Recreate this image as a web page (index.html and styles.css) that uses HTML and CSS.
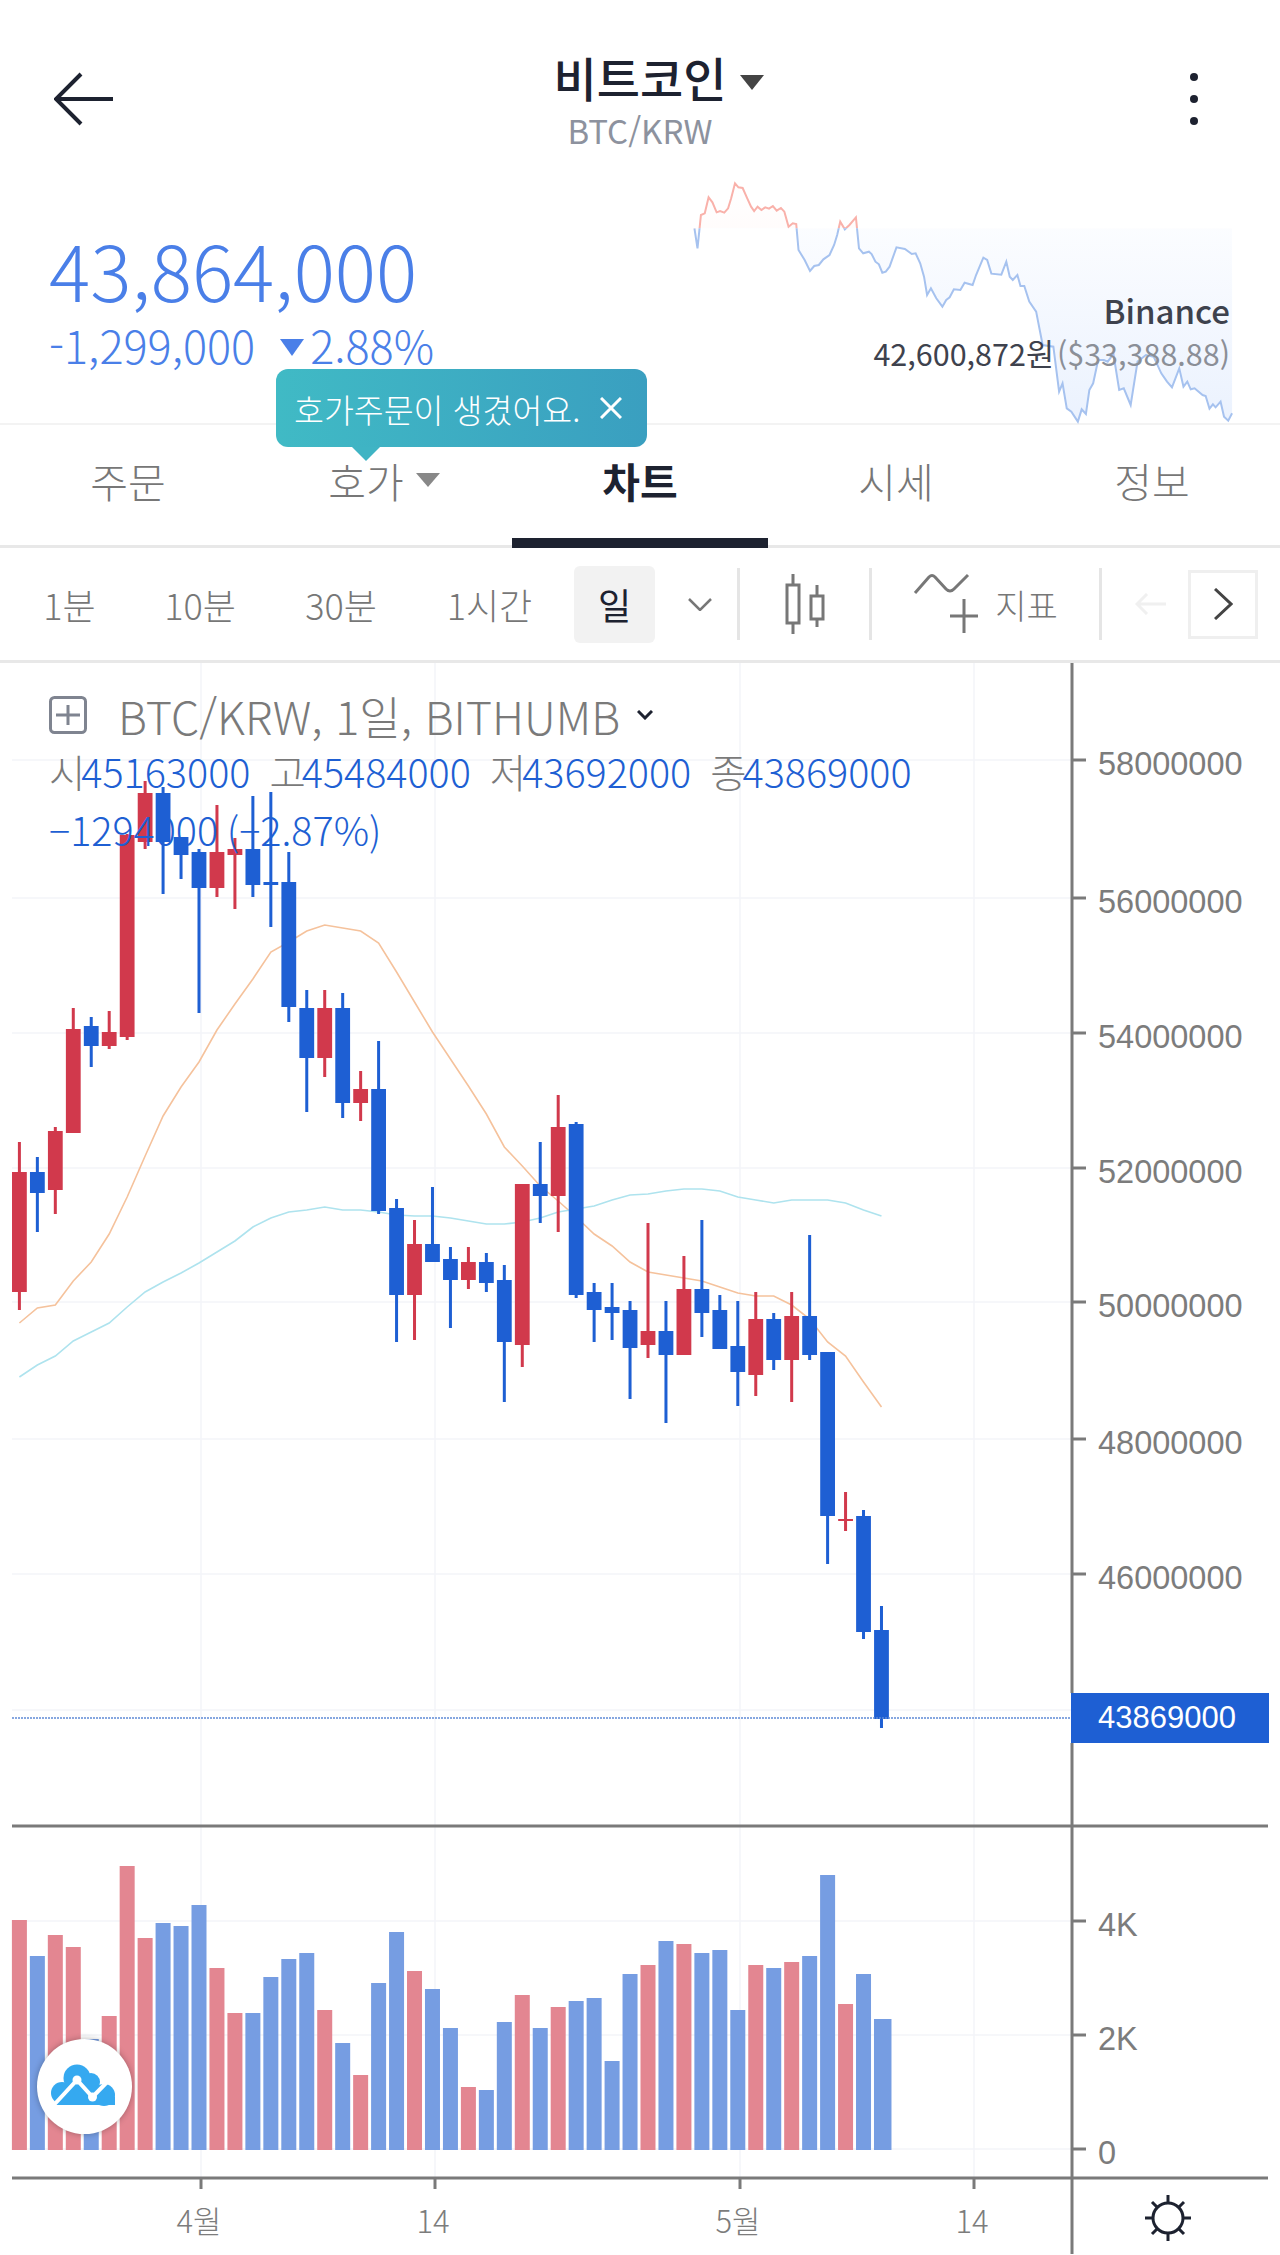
FILE: index.html
```html
<!DOCTYPE html>
<html lang="ko">
<head>
    <meta charset="UTF-8">
    <meta name="viewport" content="width=device-width, initial-scale=1.0">
    <title>비트코인 BTC/KRW</title>
    <link rel="stylesheet" href="styles.css">
</head>
<body>
    <header class="topbar">
        <svg class="icon-back" viewBox="0 0 60 54">
            <path d="M27 2 L2 27 L27 52 M2 27 H59"/>
        </svg>
        <div class="coin">
            <h1 class="coin-name">비트코인<span class="caret caret-title"></span></h1>
            <div class="coin-pair">BTC/KRW</div>
        </div>
        <div class="more"><i></i><i></i><i></i></div>
    </header>

    <section class="summary">
        <svg id="spark" class="spark" viewBox="0 0 1568 810" preserveAspectRatio="none"></svg>
        <div class="price">43,864,000</div>
        <div class="change">
            <span>-1,299,000</span>
            <span class="caret caret-down"></span>
            <span>2.88%</span>
        </div>
        <div class="exchange">
            <div class="exchange-name">Binance</div>
            <div class="exchange-price">42,600,872원<span class="exchange-usd">($33,388.88)</span></div>
        </div>
    </section>

    <div class="tip">
        <span>호가주문이 생겼어요.</span>
        <svg class="tip-close" viewBox="0 0 22 22"><path d="M1 1 L21 21 M21 1 L1 21"/></svg>
    </div>

    <nav class="tabs">
        <a class="tab">주문</a>
        <a class="tab">호가<span class="caret caret-tab"></span></a>
        <a class="tab active">차트</a>
        <a class="tab">시세</a>
        <a class="tab">정보</a>
    </nav>

    <div class="toolbar">
        <a class="tf tf-1">1분</a>
        <a class="tf tf-2">10분</a>
        <a class="tf tf-3">30분</a>
        <a class="tf tf-4">1시간</a>
        <a class="tf tf-day">일</a>
        <a class="tool tool-more">
            <svg class="icon-chev" viewBox="0 0 24 13"><path d="M1 1 L12 12 L23 1"/></svg>
        </a>
        <a class="tool tool-candle">
            <svg class="icon-line" width="40" height="60" viewBox="0 0 40 60">
                <rect x="2" y="11" width="12" height="38"/>
                <path d="M8 0 V11 M8 49 V60"/>
                <rect x="26" y="22" width="12" height="23"/>
                <path d="M32 11 V22 M32 45 V53"/>
            </svg>
        </a>
        <a class="tool tool-indicator">
            <svg class="icon-line" width="70" height="62" viewBox="0 0 70 62">
                <path d="M2 20 L16 4 Q19 1 22 4 L33 16 Q37 20 41 16 L55 2"/>
                <path d="M51 26 V60 M37 43 H65"/>
            </svg>
            <span class="tool-label">지표</span>
        </a>
        <a class="tool tool-undo">
            <svg class="icon-undo" viewBox="0 0 32 22"><path d="M12 1 L2 11 L12 21 M2 11 H31"/></svg>
        </a>
        <a class="next">
            <svg class="icon-next" viewBox="0 0 19 32"><path d="M1 1 L17 16 L1 31"/></svg>
        </a>
    </div>

    <main class="chart">
        <svg id="plot" class="plot" viewBox="0 664 1280 1591"></svg>

        <div class="legend">
            <div class="legend-title">
                <svg class="icon-plus" viewBox="0 0 38 38">
                    <rect x="1.5" y="1.5" width="35" height="35" rx="4"/>
                    <path d="M19 9 V29 M7 19 H31"/>
                </svg>
                <span>BTC/KRW, 1일, BITHUMB</span>
                <svg class="icon-fold" viewBox="0 0 16 10"><path d="M1 1 L8 8 L15 1"/></svg>
            </div>
            <div class="legend-row">
                <span class="ohlc"><b>시</b>45163000</span>
                <span class="ohlc"><b>고</b>45484000</span>
                <span class="ohlc"><b>저</b>43692000</span>
                <span class="ohlc"><b>종</b>43869000</span>
            </div>
            <div class="legend-row">−1294000 (−2.87%)</div>
        </div>

        <div class="fab">
            <svg viewBox="0 0 95 95">
                <g class="cloud">
                    <circle cx="25" cy="54" r="11"/>
                    <circle cx="40" cy="39" r="13.5"/>
                    <circle cx="54" cy="43" r="9"/>
                    <circle cx="67" cy="56" r="11"/>
                    <path d="M16 66 L26 48 H66 L78 58 V66 Z"/>
                </g>
                <path class="cloud-line" d="M15 68 L40 41 L55.5 58 L73 40"/>
                <circle class="cloud-dot" cx="40" cy="41" r="4.5"/>
                <circle class="cloud-dot" cx="55.5" cy="58" r="4.5"/>
            </svg>
        </div>

        <svg class="icon-sun" viewBox="0 0 46 46">
            <circle cx="23" cy="23" r="15"/>
            <path d="M23 0 V8 M23 38 V46 M0 23 H8 M38 23 H46 M7 7 L12 12 M39 7 L34 12 M7 39 L12 34 M39 39 L34 34"/>
        </svg>
    </main>

    <script src="chart.js"></script>
</body>
</html>
```

FILE: styles.css
```css
* {
    margin: 0;
    padding: 0;
    box-sizing: border-box;
}

body {
    position: relative;
    width: 1280px;
    height: 2255px;
    overflow: hidden;
    background: #fff;
    color: #1d2230;
    font-family: 'Noto Sans CJK KR', 'Noto Sans', sans-serif;
}

/* header */
.topbar {
    display: grid;
    grid-template-columns: 1fr auto 1fr;
    align-items: start;
    height: 170px;
    padding: 47px 82px 0;
}

.icon-back {
    width: 60px;
    height: 54px;
    margin: 25px 0 0 -28px;
    fill: none;
    stroke: #1d2230;
    stroke-width: 4;
}

.coin {
    text-align: center;
}

.coin-name {
    font-size: 47px;
    font-weight: 500;
    line-height: 60px;
}

.coin-pair {
    font-size: 33px;
    line-height: 40px;
    margin-top: 3px;
    color: #8d929e;
}

.caret {
    display: inline-block;
    width: 0;
    height: 0;
    border-style: solid;
    border-color: #444 transparent transparent;
}

.caret-title {
    border-width: 15px 12px 0;
    margin: 0 -38px 0 14px;
    vertical-align: 7px;
}

.more {
    justify-self: end;
    display: flex;
    flex-direction: column;
    gap: 14px;
    padding-top: 26px;
}

.more i {
    width: 8px;
    height: 8px;
    border-radius: 50%;
    background: #1d2230;
}

/* price summary */
.summary {
    position: relative;
    height: 255px;
    padding: 57px 0 0 49px;
    border-bottom: 2px solid #f3f3f3;
}

.spark {
    position: absolute;
    left: 660px;
    top: 0;
    width: 600px;
    height: 270px;
}

.spark path,
.spark polyline {
    vector-effect: non-scaling-stroke;
}

.spark-line {
    fill: none;
    stroke-width: 2;
}

.spark-up { stroke: #f9b1aa; }
.spark-down { stroke: #a6c2ef; }

.price {
    position: relative;
    font-size: 77px;
    font-weight: 300;
    line-height: 84px;
    color: #4a7fe8;
}

.change {
    position: relative;
    display: flex;
    align-items: center;
    margin-top: 9px;
    font-size: 45px;
    font-weight: 300;
    line-height: 50px;
    color: #4a7fe8;
}

.caret-down {
    border-width: 17px 12px 0;
    border-top-color: #4a7fe8;
    margin: 5px 6px 0 25px;
}

.exchange {
    position: absolute;
    right: 50px;
    top: 117px;
    text-align: right;
}

.exchange-name {
    font-size: 33px;
    font-weight: 500;
    line-height: 46px;
    color: #3e424d;
}

.exchange-price {
    font-size: 30.5px;
    line-height: 40px;
    color: #3e424d;
}

.exchange-usd {
    color: #8b8f97;
    margin-left: 3px;
}

/* tooltip over the tabs */
.tip {
    position: absolute;
    left: 276px;
    top: 369px;
    width: 371px;
    height: 78px;
    display: flex;
    align-items: center;
    gap: 20px;
    padding-left: 18px;
    border-radius: 12px;
    background: linear-gradient(90deg, #40bac5, #3a9fc0);
    color: #fff;
    font-size: 32.5px;
    font-weight: 300;
    white-space: nowrap;
    z-index: 2;
}

.tip::after {
    content: '';
    position: absolute;
    left: 76px;
    top: 78px;
    border-style: solid;
    border-width: 14px 14px 0;
    border-color: #3fb4c4 transparent transparent;
}

.tip-close {
    width: 22px;
    height: 22px;
    fill: none;
    stroke: #fff;
    stroke-width: 3;
}

/* tabs */
.tabs {
    display: flex;
    height: 123px;
    border-bottom: 3px solid #e8e8e8;
}

.tab {
    position: relative;
    flex: 1;
    display: flex;
    align-items: center;
    justify-content: center;
    padding-bottom: 10px;
    font-size: 41px;
    font-weight: 300;
    color: #777;
}

.tab.active {
    color: #1d2230;
    font-weight: 700;
}

.tab.active::after {
    content: '';
    position: absolute;
    left: 0;
    right: 0;
    bottom: -3px;
    height: 10px;
    background: #1d2230;
}

.caret-tab {
    border-width: 14px 12px 0;
    border-top-color: #888;
    margin-left: 12px;
}

/* toolbar */
.toolbar {
    display: flex;
    align-items: center;
    height: 115px;
    border-bottom: 3px solid #e8e8e8;
    font-size: 36px;
    font-weight: 300;
    color: #777;
}

.tf {
    display: flex;
    align-items: center;
    justify-content: center;
    height: 77px;
}

.tf-1 { width: 139px; }
.tf-2 { width: 122px; }
.tf-3 { width: 160px; }
.tf-4 { width: 137px; margin-right: 16px; }

.tf-day {
    width: 81px;
    border-radius: 6px;
    background: #f2f2f2;
    color: #1d2230;
    font-weight: 400;
}

.tool {
    display: flex;
    align-items: center;
    justify-content: center;
    height: 72px;
    border-right: 3px solid #e5e5e5;
}

.tool-more { width: 85px; padding-left: 8px; }
.tool-candle { width: 132px; }
.tool-indicator { width: 230px; gap: 12px; }
.tool-undo { width: 86px; border-right: 0; }

.tool-label {
    font-size: 34px;
}

.icon-chev {
    width: 24px;
    height: 13px;
    fill: none;
    stroke: #777;
    stroke-width: 2.5;
}

.icon-line {
    fill: none;
    stroke: #777;
    stroke-width: 3;
}

.icon-undo {
    width: 32px;
    height: 22px;
    margin-left: 12px;
    fill: none;
    stroke: #f0f0f0;
    stroke-width: 3;
}

.next {
    display: flex;
    align-items: center;
    justify-content: center;
    width: 70px;
    height: 69px;
    border: 3px solid #efefef;
}

.icon-next {
    width: 19px;
    height: 32px;
    fill: none;
    stroke: #444;
    stroke-width: 3;
}

/* chart */
.chart {
    position: relative;
    height: 1592px;
}

.plot {
    display: block;
    width: 1280px;
    height: 1591px;
}

.grid { stroke: #f3f5f8; stroke-width: 1.5; }
.axis { stroke: #7a7a7a; stroke-width: 3; }
.tick { stroke: #7a7a7a; stroke-width: 3; }

.axis-label {
    font-family: 'Liberation Sans', Arial, sans-serif;
    font-size: 32.5px;
    fill: #7c7c7c;
}

.axis-label-date {
    font-family: 'Noto Sans CJK KR', 'Liberation Sans', sans-serif;
    font-size: 31px;
    font-weight: 300;
    text-anchor: middle;
}

.last-line {
    stroke: #5f8ad6;
    stroke-width: 1.5;
    stroke-dasharray: 2 1;
}

.last-box { fill: #1e5fd3; }

.last-label {
    font-family: 'Liberation Sans', Arial, sans-serif;
    font-size: 31px;
    fill: #fff;
}

.ma-slow { fill: none; stroke: #f5c29c; stroke-width: 1.6; }
.ma-long { fill: none; stroke: #aee3ee; stroke-width: 1.6; }

.up { fill: #d1394c; }
.down { fill: #1e5fd3; }
.vol-up { fill: #e38691; }
.vol-down { fill: #769de2; }

.legend {
    position: absolute;
    left: 49px;
    top: 22px;
    color: #1e5fd3;
    font-size: 39.5px;
    font-weight: 300;
    white-space: nowrap;
}

.legend-title {
    display: flex;
    align-items: center;
    height: 60px;
    font-size: 45px;
    color: #7a7a7a;
}

.legend-title span {
    margin-left: 31px;
}

.icon-plus {
    width: 38px;
    height: 38px;
    fill: none;
    stroke: #7f8490;
    stroke-width: 3;
}

.icon-fold {
    width: 16px;
    height: 10px;
    margin-left: 17px;
    fill: none;
    stroke: #1d2230;
    stroke-width: 3;
}

.legend-row {
    display: flex;
    gap: 19px;
    height: 58px;
    line-height: 52px;
}

.ohlc b {
    font-weight: 300;
    color: #7a7a7a;
    margin-right: -4px;
}

.fab {
    position: absolute;
    left: 37px;
    top: 1376px;
    width: 95px;
    height: 95px;
    border-radius: 50%;
    background: #fff;
    box-shadow: 0 0 6px rgba(0, 0, 0, 0.3);
}

.cloud { fill: #35a9f0; }
.cloud-line { fill: none; stroke: #fff; stroke-width: 4; }
.cloud-dot { fill: #fff; }

.icon-sun {
    position: absolute;
    left: 1145px;
    top: 1532px;
    width: 46px;
    height: 46px;
    fill: none;
    stroke: #1d2230;
    stroke-width: 3;
}
```

FILE: chart.js
```js
const NS = 'http://www.w3.org/2000/svg';

// color, wick top, body top, body bottom, wick bottom
const candles = [
    ['r', 1143, 1173, 1293, 1311], ['b', 1158, 1173, 1194, 1233], ['r', 1128, 1132, 1191, 1215],
    ['r', 1009, 1030, 1134, 1134], ['b', 1018, 1027, 1047, 1068], ['r', 1012, 1033, 1047, 1050],
    ['r', 835, 836, 1038, 1041], ['r', 782, 794, 843, 850], ['b', 788, 794, 843, 895],
    ['b', 838, 838, 856, 880], ['b', 850, 853, 889, 1014], ['r', 806, 853, 889, 898],
    ['r', 839, 850, 856, 910], ['b', 797, 850, 886, 898], ['b', 793, 883, 886, 928],
    ['b', 853, 883, 1008, 1023], ['b', 991, 1009, 1059, 1113], ['r', 991, 1009, 1059, 1078],
    ['b', 994, 1009, 1104, 1119], ['r', 1072, 1090, 1104, 1122], ['b', 1042, 1090, 1212, 1215],
    ['b', 1200, 1209, 1296, 1343], ['r', 1221, 1245, 1296, 1341], ['b', 1188, 1245, 1263, 1263],
    ['b', 1248, 1260, 1281, 1329], ['r', 1248, 1263, 1281, 1290], ['b', 1254, 1263, 1284, 1293],
    ['b', 1266, 1281, 1343, 1403], ['r', 1185, 1185, 1346, 1368], ['b', 1143, 1185, 1197, 1224],
    ['r', 1096, 1128, 1197, 1233], ['b', 1123, 1125, 1296, 1299], ['b', 1284, 1293, 1311, 1343],
    ['b', 1284, 1308, 1314, 1341], ['b', 1302, 1311, 1349, 1400], ['r', 1224, 1332, 1346, 1359],
    ['b', 1302, 1332, 1356, 1424], ['r', 1257, 1290, 1356, 1356], ['b', 1221, 1290, 1314, 1338],
    ['b', 1296, 1311, 1350, 1350], ['b', 1302, 1347, 1373, 1407], ['r', 1293, 1320, 1376, 1397],
    ['b', 1314, 1320, 1361, 1371], ['r', 1293, 1317, 1361, 1403], ['b', 1236, 1317, 1356, 1361],
    ['b', 1353, 1353, 1517, 1565], ['r', 1493, 1520, 1522, 1532], ['b', 1511, 1517, 1633, 1640],
    ['b', 1607, 1631, 1720, 1729]
];

const volumeTops = [
    1921, 1957, 1936, 1948, 2040, 2017, 1867, 1939, 1924, 1927, 1906, 1969, 2014, 2014, 1978, 1960,
    1954, 2011, 2044, 2076, 1984, 1933, 1972, 1990, 2029, 2088, 2091, 2023, 1996, 2029, 2008, 2002,
    1999, 2062, 1975, 1966, 1942, 1945, 1954, 1951, 2011, 1966, 1969, 1963, 1957, 1876, 2005, 1975,
    2020
];

const maSlow = [
    1324, 1309, 1306, 1282, 1263, 1235, 1198, 1157, 1117, 1088, 1063, 1031, 1005, 980, 953, 943,
    932, 926, 929, 932, 944, 973, 1003, 1033, 1060, 1087, 1115, 1148, 1167, 1187, 1202, 1218,
    1235, 1247, 1263, 1273, 1276, 1279, 1282, 1288, 1294, 1297, 1297, 1306, 1320, 1343, 1357, 1383,
    1408
];

const maLong = [
    1378, 1366, 1357, 1342, 1333, 1324, 1308, 1293, 1283, 1274, 1264, 1253, 1242, 1228, 1219, 1213,
    1211, 1208, 1211, 1211, 1213, 1216, 1217, 1217, 1219, 1222, 1225, 1225, 1223, 1219, 1213, 1210,
    1207, 1201, 1196, 1195, 1192, 1190, 1190, 1192, 1198, 1201, 1204, 1201, 1201, 1201, 1204, 1211,
    1217
];

const priceTicks = [
    [761, '58000000'], [899, '56000000'], [1034, '54000000'], [1169, '52000000'],
    [1303, '50000000'], [1440, '48000000'], [1575, '46000000']
];
const volumeTicks = [[1922, '4K'], [2036, '2K'], [2150, '0']];
const dateTicks = [[201, '4월'], [435, '14'], [740, '5월'], [974, '14']];

// sparkline is kept in its own 1568x810 box
const sparkBase = 175;
const sparkPoints = [
    [90, 175], [98, 235], [107, 135], [117, 130], [127, 82], [137, 97], [148, 127], [157, 123],
    [168, 128], [178, 115], [186, 85], [196, 40], [205, 52], [216, 54], [228, 85], [238, 110],
    [246, 123], [255, 110], [265, 120], [275, 112], [285, 116], [295, 108], [305, 122], [316, 114],
    [325, 125], [336, 170], [347, 160], [356, 162], [362, 240], [378, 270], [392, 303], [403, 288],
    [415, 285], [427, 268], [443, 255], [455, 225], [463, 195], [471, 155], [483, 178], [495, 165],
    [512, 142], [520, 235], [531, 250], [546, 245], [553, 252], [563, 275], [572, 283], [581, 308],
    [590, 305], [600, 290], [618, 232], [640, 237], [658, 252], [668, 250], [680, 280], [690, 320],
    [698, 375], [708, 355], [722, 385], [738, 410], [748, 390], [757, 382], [768, 358], [785, 360],
    [796, 338], [817, 345], [826, 315], [845, 263], [855, 270], [866, 311], [892, 314], [905, 275],
    [914, 320], [922, 330], [934, 315], [942, 348], [952, 348], [965, 395], [983, 425], [1000, 525],
    [1028, 530], [1043, 665], [1052, 640], [1063, 715], [1075, 725], [1092, 755], [1102, 718],
    [1113, 732], [1122, 660], [1132, 640], [1145, 570], [1160, 570], [1170, 575], [1185, 552],
    [1200, 660], [1212, 655], [1230, 705], [1248, 575], [1270, 555], [1290, 560], [1310, 610],
    [1325, 635], [1338, 652], [1357, 595], [1368, 650], [1378, 635], [1387, 658], [1397, 655],
    [1418, 675], [1426, 678], [1436, 716], [1445, 703], [1452, 712], [1465, 695], [1474, 740],
    [1485, 752], [1495, 730]
];

function el(parent, tag, attrs, text) {
    const node = document.createElementNS(NS, tag);
    for (const key in attrs) {
        node.setAttribute(key, attrs[key]);
    }
    if (text) {
        node.textContent = text;
    }
    parent.appendChild(node);
    return node;
}

function candleX(i) {
    return 19.4 + 17.96 * i;
}

function drawSpark() {
    const svg = document.getElementById('spark');
    const defs = el(svg, 'defs', {});

    const upClip = el(defs, 'clipPath', { id: 'spark-above' });
    el(upClip, 'rect', { x: 0, y: 0, width: 1568, height: sparkBase });
    const downClip = el(defs, 'clipPath', { id: 'spark-below' });
    el(downClip, 'rect', { x: 0, y: sparkBase, width: 1568, height: 810 });

    const upFade = el(defs, 'linearGradient', { id: 'fade-up', x1: 0, y1: 0, x2: 0, y2: 1 });
    el(upFade, 'stop', { offset: 0, 'stop-color': '#fff' });
    el(upFade, 'stop', { offset: 1, 'stop-color': '#ffefed' });
    const downFade = el(defs, 'linearGradient', { id: 'fade-down', x1: 0, y1: 0, x2: 0, y2: 1 });
    el(downFade, 'stop', { offset: 0, 'stop-color': '#fff' });
    el(downFade, 'stop', { offset: 1, 'stop-color': '#ebf2fe' });

    const line = sparkPoints.map(p => p.join(',')).join(' ');
    const area = line + ' 1495,' + sparkBase + ' 90,' + sparkBase;

    el(svg, 'polygon', { points: area, fill: 'url(#fade-up)', 'clip-path': 'url(#spark-above)' });
    el(svg, 'polygon', { points: area, fill: 'url(#fade-down)', 'clip-path': 'url(#spark-below)' });
    el(svg, 'polyline', { points: line, class: 'spark-line spark-up', 'clip-path': 'url(#spark-above)' });
    el(svg, 'polyline', { points: line, class: 'spark-line spark-down', 'clip-path': 'url(#spark-below)' });
}

function drawPlot() {
    const svg = document.getElementById('plot');

    // grid first so everything else sits on top
    dateTicks.forEach(([x]) => {
        el(svg, 'line', { class: 'grid', x1: x, x2: x, y1: 664, y2: 2179 });
    });
    priceTicks.concat(volumeTicks).forEach(([y]) => {
        el(svg, 'line', { class: 'grid', x1: 12, x2: 1072, y1: y, y2: y });
    });
    el(svg, 'line', { class: 'grid', x1: 12, x2: 1072, y1: 1711, y2: 1711 });

    // volume
    volumeTops.forEach((top, i) => {
        const wide = i === volumeTops.length - 1 ? 17.5 : 15;
        el(svg, 'rect', {
            class: candles[i][0] === 'r' ? 'vol-up' : 'vol-down',
            x: candleX(i) - 7.5,
            y: top,
            width: wide,
            height: 2151 - top
        });
    });

    // moving averages
    el(svg, 'polyline', {
        class: 'ma-slow',
        points: maSlow.map((y, i) => candleX(i) + ',' + y).join(' ')
    });
    el(svg, 'polyline', {
        class: 'ma-long',
        points: maLong.map((y, i) => candleX(i) + ',' + y).join(' ')
    });

    // candles
    candles.forEach(([color, wickTop, bodyTop, bodyBottom, wickBottom], i) => {
        const cls = color === 'r' ? 'up' : 'down';
        const x = candleX(i);
        el(svg, 'rect', { class: cls, x: x - 1.5, y: wickTop, width: 3, height: wickBottom - wickTop });
        el(svg, 'rect', { class: cls, x: x - 7.4, y: bodyTop, width: 14.8, height: bodyBottom - bodyTop });
    });

    // last price
    el(svg, 'line', { class: 'last-line', x1: 12, x2: 1070, y1: 1719, y2: 1719 });
    el(svg, 'rect', { class: 'last-box', x: 1071, y: 1694, width: 198, height: 50 });
    el(svg, 'text', { class: 'last-label', x: 1098, y: 1729 }, '43869000');

    // axes
    el(svg, 'line', { class: 'axis', x1: 1072, x2: 1072, y1: 664, y2: 1694 });
    el(svg, 'line', { class: 'axis', x1: 1072, x2: 1072, y1: 1744, y2: 2255 });
    el(svg, 'line', { class: 'axis', x1: 12, x2: 1268, y1: 1827, y2: 1827 });
    el(svg, 'line', { class: 'axis', x1: 12, x2: 1268, y1: 2179, y2: 2179 });

    priceTicks.concat(volumeTicks).forEach(([y, label]) => {
        el(svg, 'line', { class: 'tick', x1: 1072, x2: 1086, y1: y, y2: y });
        el(svg, 'text', { class: 'axis-label', x: 1098, y: y + 15 }, label);
    });

    dateTicks.forEach(([x, label]) => {
        el(svg, 'line', { class: 'tick', x1: x, x2: x, y1: 2179, y2: 2190 });
        el(svg, 'text', { class: 'axis-label axis-label-date', x: x - 2, y: 2234 }, label);
    });
}

drawSpark();
drawPlot();
```
